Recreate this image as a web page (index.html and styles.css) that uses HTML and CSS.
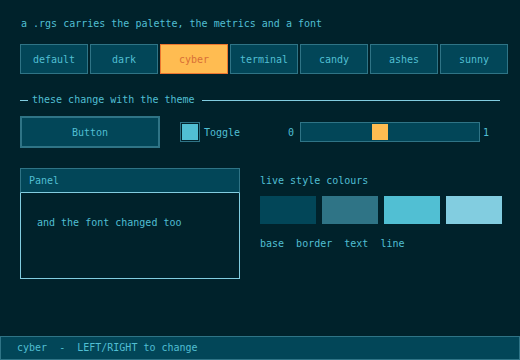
FILE: index.html
```html
<!DOCTYPE html>
<html lang="en">
<head>
    <meta charset="UTF-8">
    <title>Style switcher - cyber</title>
    <link rel="stylesheet" href="styles.css">
</head>
<body>
    <div class="screen">
        <main class="content">
            <p class="intro">a .rgs carries the palette, the metrics and a font</p>

            <div class="themes">
                <button class="theme">default</button>
                <button class="theme">dark</button>
                <button class="theme active">cyber</button>
                <button class="theme">terminal</button>
                <button class="theme">candy</button>
                <button class="theme">ashes</button>
                <button class="theme">sunny</button>
            </div>

            <div class="divider">
                <span class="dash"></span>
                <span class="divider-text">these change with the theme</span>
                <span class="rule"></span>
            </div>

            <div class="controls">
                <button class="big-button">Button</button>
                <label class="toggle">
                    <span class="check"><span class="check-fill"></span></span>
                    <span>Toggle</span>
                </label>
                <span class="range-min">0</span>
                <div class="slider"><span class="handle" style="left: 71px"></span></div>
                <span class="range-max">1</span>
            </div>

            <div class="lower">
                <div class="panel">
                    <div class="panel-head">Panel</div>
                    <div class="panel-body">and the font changed too</div>
                </div>
                <div class="colours">
                    <p class="colours-title">live style colours</p>
                    <div class="swatches">
                        <span class="swatch base"></span>
                        <span class="swatch border"></span>
                        <span class="swatch text"></span>
                        <span class="swatch line"></span>
                    </div>
                    <p class="swatch-names">base  border  text  line</p>
                </div>
            </div>
        </main>

        <footer class="status">cyber  -  LEFT/RIGHT to change</footer>
    </div>
</body>
</html>
```

FILE: styles.css
```css
body {
    margin: 0;
    background-color: #00222b;
    color: #51bfd3;
    font-family: "DejaVu Sans Mono", "Liberation Mono", monospace;
    font-size: 10px;
}

p {
    margin: 0;
}

.screen {
    display: flex;
    flex-direction: column;
    width: 520px;
    height: 360px;
}

.content {
    flex: 1;
    padding: 0 20px;
}

.intro {
    margin-top: 18px;
    padding-left: 1px;
    line-height: 12px;
}

.themes {
    display: flex;
    gap: 2px;
    margin-top: 14px;
}

.theme {
    flex-shrink: 0;
    width: 68px;
    height: 30px;
    padding: 0;
    background-color: #024658;
    border: 1px solid #2f7486;
    color: #51bfd3;
    font: inherit;
}

.theme.active {
    background-color: #ffbc51;
    border-color: #eb7630;
    color: #d86f36;
}

.divider {
    display: flex;
    align-items: center;
    width: 480px;
    height: 12px;
    margin-top: 20px;
}

.dash {
    width: 8px;
    height: 1px;
    background-color: #82cde0;
}

.divider-text {
    margin: 0 7px 0 4px;
    line-height: 12px;
}

.rule {
    flex: 1;
    height: 1px;
    background-color: #82cde0;
}

.controls {
    display: flex;
    align-items: center;
    height: 32px;
    margin-top: 10px;
}

.big-button {
    flex-shrink: 0;
    width: 140px;
    height: 32px;
    padding: 0;
    background-color: #024658;
    border: 2px solid #2f7486;
    color: #51bfd3;
    font: inherit;
}

.toggle {
    display: flex;
    align-items: center;
    gap: 4px;
    width: 108px;
    margin-left: 20px;
}

.check {
    box-sizing: border-box;
    width: 20px;
    height: 20px;
    padding: 1px;
    border: 1px solid #2f7486;
}

.check-fill {
    display: block;
    width: 16px;
    height: 16px;
    background-color: #51bfd3;
}

.range-min {
    width: 8px;
    margin-right: 4px;
}

.slider {
    position: relative;
    flex-shrink: 0;
    box-sizing: border-box;
    width: 180px;
    height: 20px;
    background-color: #024658;
    border: 1px solid #2f7486;
}

.handle {
    position: absolute;
    top: 1px;
    width: 16px;
    height: 16px;
    background-color: #ffbc51;
}

.range-max {
    margin-left: 3px;
}

.lower {
    display: flex;
    gap: 20px;
    margin-top: 20px;
}

.panel {
    flex-shrink: 0;
    width: 220px;
}

.panel-head {
    height: 23px;
    padding-left: 8px;
    background-color: #024658;
    border: 1px solid #2f7486;
    border-bottom: 1px solid #82cde0;
    line-height: 23px;
}

.panel-body {
    height: 61px;
    padding: 24px 0 0 16px;
    border: 1px solid #82cde0;
    border-top: none;
    line-height: 12px;
}

.colours {
    flex-shrink: 0;
    padding-top: 7px;
}

.colours-title {
    line-height: 12px;
}

.swatches {
    display: flex;
    gap: 6px;
    margin-top: 9px;
}

.swatch {
    width: 56px;
    height: 28px;
}

.swatch.base { background-color: #024658; }
.swatch.border { background-color: #2f7486; }
.swatch.text { background-color: #51bfd3; }
.swatch.line { background-color: #82cde0; }

.swatch-names {
    margin-top: 14px;
    line-height: 12px;
    white-space: pre;
}

.status {
    box-sizing: border-box;
    height: 24px;
    padding-left: 16px;
    background-color: #024658;
    border: 1px solid #2f7486;
    line-height: 22px;
    white-space: pre;
}
```
